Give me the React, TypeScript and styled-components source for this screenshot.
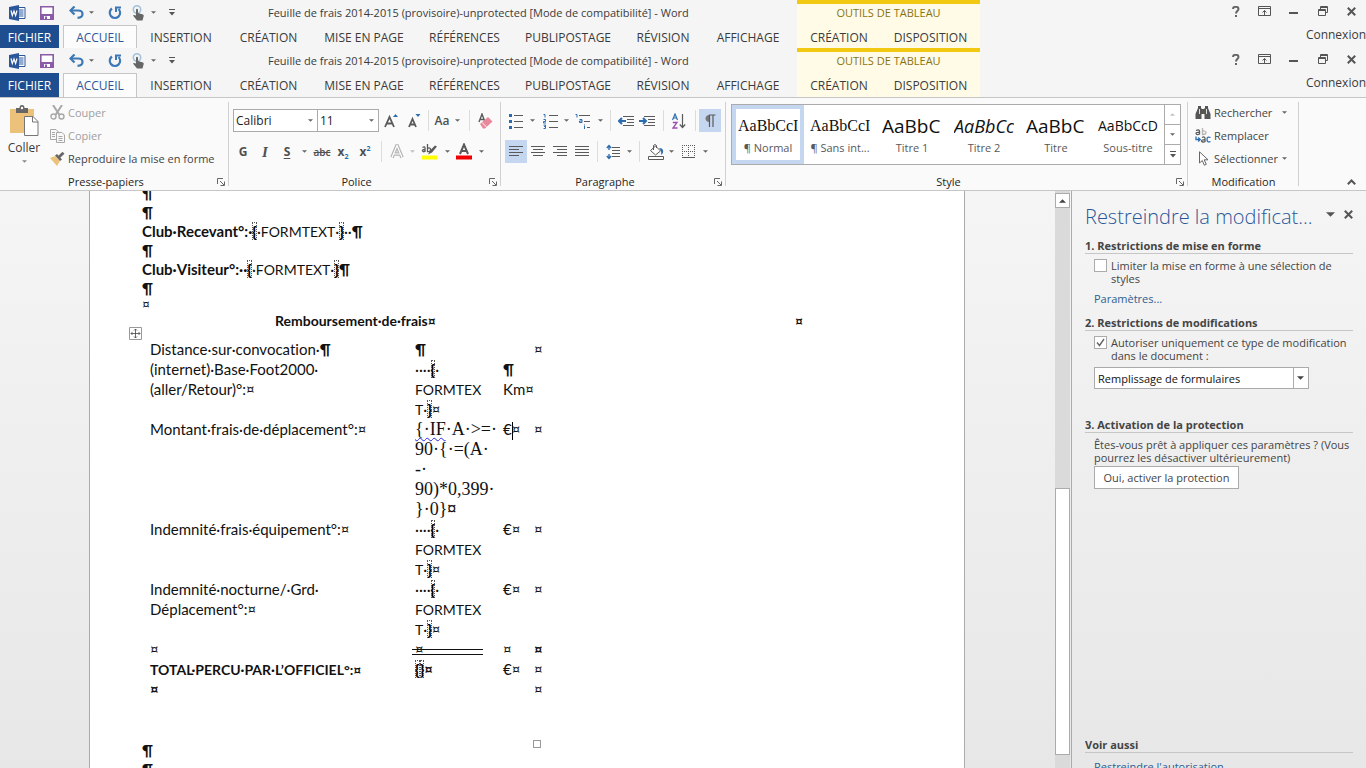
import React from "react";
import styled, { createGlobalStyle, css } from "styled-components";

const UI = `"Open Sans", "Noto Sans", sans-serif`;
const BODY = `Lato, "Noto Sans", sans-serif`;
const SERIF = `"Liberation Serif", serif`;
const BLUE = "#2b6cb0";
const INK = "#5a5a5a";

const Global = createGlobalStyle`
  * { box-sizing: border-box; }
  body { margin: 0; font-family: ${UI}; font-size: 12px; color: #3b3b3b; overflow: hidden; }
  button { font: inherit; color: inherit; background: none; border: 0; padding: 0; cursor: pointer; }
  svg { display: block; flex: none; }
`;

const App_ = styled.div`
  display: flex;
  flex-direction: column;
  height: 100vh;
  background: #f5f5f5;
`;

/* ---------- title bar and tabs ---------- */

const HeaderBar = styled.header<{ $last?: boolean }>`
  display: flex;
  flex: none;
  height: ${(p) => (p.$last ? 50 : 48)}px;
  background: #f5f5f5;
  border-bottom: ${(p) => (p.$last ? "1px solid #c6c6c6" : "0")};
`;
const HeaderMain = styled.div`
  flex: none;
  width: 797px;
  display: flex;
  flex-direction: column;
`;
const TitleRow = styled.div`
  display: flex;
  align-items: center;
  height: 25px;
  flex: none;
`;
const QuickBar = styled.div`
  display: flex;
  align-items: center;
  width: 268px;
  height: 22px;
  padding-left: 9px;
`;
const QuickButton = styled.button<{ $w: number }>`
  display: flex;
  align-items: center;
  justify-content: center;
  width: ${(p) => p.$w}px;
  height: 22px;
`;
const DocTitle = styled.h1`
  margin: 0;
  font-size: 11px;
  line-height: 25px;
  font-weight: 400;
  white-space: nowrap;
`;
const Tabs = styled.nav`
  display: flex;
  flex: 1;
`;
const Tab = styled.button<{ $w: number; $kind?: "file" | "active" }>`
  width: ${(p) => p.$w}px;
  height: 100%;
  padding-top: 2px;
  line-height: 20px;
  white-space: nowrap;
  text-align: center;
  ${(p) => p.$kind === "file" && css`
    background: #1e4e8f;
    color: #fff;
    margin-right: 4px;
  `}
  ${(p) => p.$kind === "active" && css`
    color: #2b579a;
    background: #fcfcfc;
    border: 1px solid #c6c6c6;
    border-bottom: 0;
    padding-top: 1px;
  `}
`;
const Contextual = styled.div`
  display: flex;
  flex-direction: column;
  flex: none;
  width: 183px;
  border-top: 4px solid #f2c811;
  background: #fffbe6;
`;
const ContextTitle = styled.div`
  height: 21px;
  line-height: 18px;
  text-align: center;
  font-size: 11px;
  color: #8a7412;
`;
const HeaderRight = styled.div`
  flex: 1;
  display: flex;
  flex-direction: column;
  align-items: flex-end;
`;
const WindowButtons = styled.div`
  display: flex;
  height: 24px;
`;
const WindowButton = styled.button`
  display: flex;
  align-items: center;
  justify-content: center;
  width: 29px;
  height: 22px;
`;
const SignIn = styled.a`
  line-height: 22px;
  color: inherit;
  text-decoration: none;
`;

/* ---------- ribbon ---------- */

const Ribbon = styled.section`
  display: flex;
  flex: none;
  height: 93px;
  background: #fafafa;
  border-bottom: 1px solid #c6c6c6;
`;
const GroupBox = styled.div<{ $w: number }>`
  display: flex;
  flex-direction: column;
  flex: none;
  width: ${(p) => p.$w}px;
  position: relative;
  &::after {
    content: "";
    position: absolute;
    right: 0;
    top: 4px;
    bottom: 4px;
    width: 1px;
    background: #d0d0d0;
  }
`;
const GroupBody = styled.div`
  flex: 1;
  display: flex;
  padding-left: 4px;
`;
const GroupFoot = styled.div<{ $launch: boolean }>`
  display: flex;
  align-items: center;
  justify-content: center;
  height: 18px;
  padding-right: ${(p) => (p.$launch ? 17 : 0)}px;
  font-size: 11px;
  color: #262626;
`;
const Launcher = styled.button`
  position: absolute;
  right: 4px;
  bottom: 4px;
`;
const ToolRows = styled.div`
  display: flex;
  flex-direction: column;
  gap: 8px;
  padding-top: 11px;
`;
const ToolRow = styled.div`
  display: flex;
  align-items: center;
  height: 23px;
`;
const Tool = styled.button<{ $w: number; $on?: boolean }>`
  display: flex;
  align-items: center;
  justify-content: center;
  width: ${(p) => p.$w}px;
  height: 23px;
  flex: none;
  color: #505050;
  background: ${(p) => (p.$on ? "#c5d6f1" : "transparent")};
`;
const Divider = styled.span<{ $w: number }>`
  display: flex;
  justify-content: center;
  width: ${(p) => p.$w}px;
  height: 21px;
  flex: none;
  &::before { content: ""; width: 1px; background: #dcdcdc; }
`;
const Combo = styled.button<{ $w: number }>`
  display: flex;
  align-items: center;
  justify-content: space-between;
  width: ${(p) => p.$w}px;
  height: 23px;
  padding: 0 4px 0 2px;
  color: #1c1c1c;
  background: #fff;
  border: 1px solid #ababab;
  & + & { border-left: 0; }
`;
const PasteButton = styled.button`
  display: flex;
  flex-direction: column;
  align-items: center;
  width: 40px;
  padding-top: 7px;
  line-height: 20px;
  gap: 2px;
`;
const Stack = styled.div<{ $left: number }>`
  display: flex;
  flex-direction: column;
  padding: 3px 0 0 ${(p) => p.$left}px;
`;
const Command = styled.button<{ $off?: boolean }>`
  display: flex;
  align-items: center;
  height: 23px;
  gap: 3px;
  font-size: 11px;
  color: ${(p) => (p.$off ? "#a0a0a0" : "#444")};
  white-space: nowrap;
`;
const CommandText = styled.span`
  min-width: 65px;
  text-align: left;
`;
const Gallery = styled.div`
  display: flex;
  width: 450px;
  height: 61px;
  margin: 6px 0 0 1px;
  background: #fff;
  border: 1px solid #ababab;
`;
const StyleTile = styled.button<{ $on?: boolean }>`
  display: flex;
  flex-direction: column;
  align-items: center;
  width: 72px;
  height: 59px;
  overflow: hidden;
  border: 4px solid ${(p) => (p.$on ? "#c5d6f1" : "transparent")};
`;
const StyleSample = styled.span<{ $font: string; $size: number; $weight: number; $italic?: boolean }>`
  width: 60px;
  margin-top: 4px;
  overflow: hidden;
  text-align: left;
  white-space: nowrap;
  line-height: 26px;
  height: 26px;
  color: #111;
  font-family: ${(p) => p.$font};
  font-size: ${(p) => p.$size}px;
  font-weight: ${(p) => p.$weight};
  font-style: ${(p) => (p.$italic ? "italic" : "normal")};
`;
const StyleName = styled.span`
  line-height: 24px;
  font-size: 11px;
  color: #595959;
  white-space: nowrap;
`;
const GalleryScroll = styled.div`
  display: flex;
  flex-direction: column;
  width: 16px;
  border-left: 1px solid #ababab;
`;
const GalleryStep = styled.button`
  flex: 1;
  display: flex;
  align-items: center;
  justify-content: center;
  & + & { border-top: 1px solid #ababab; }
`;
const Collapse = styled.button`
  margin-left: auto;
  align-self: flex-end;
  padding: 0 10px 5px 0;
`;

/* ---------- work area ---------- */

const Workspace = styled.main`
  display: flex;
  flex: 1;
  min-height: 0;
  overflow: hidden;
  background: linear-gradient(#f5f5f5, #e7e7e7);
`;
const Canvas = styled.div`
  flex: 1;
  display: flex;
  justify-content: center;
  min-width: 0;
  padding-right: 1px;
`;
const Page = styled.article`
  position: relative;
  width: 876px;
  background: #fff;
  border: solid #ababab;
  border-width: 0 1px;
  padding-left: 52px;
  overflow: hidden;
  color: #111;
  font-family: ${BODY};
  font-size: 15px;
  font-variant-ligatures: none;
`;
const Lines = styled.div<{ $top?: number }>`
  margin-top: ${(p) => p.$top || 0}px;
`;
const Para = styled.p`
  margin: 0;
  line-height: 19px;
  height: 19px;
  white-space: nowrap;
`;
const SmallMark = styled.p`
  margin: 0;
  font-size: 14px;
  line-height: 12px;
`;
const HeadRow = styled.div`
  display: grid;
  grid-template-columns: 520px 1fr;
  padding: 1px 0 8px 133px;
  line-height: 20px;
  font-size: 14px;
  font-weight: 700;
`;
const FeeTable = styled.table`
  border-collapse: collapse;
  table-layout: fixed;
  width: 415px;
  line-height: 20px;
  td {
    padding: 0 0 0 8px;
    vertical-align: top;
    white-space: nowrap;
  }
`;
const Caps = styled.span`
  font-size: 14px;
  line-height: 1;
`;
const CodeText = styled.span`
  font-family: ${SERIF};
  font-size: 18px;
  line-height: 20px;
  display: block;
`;
const Squiggle = styled.span`
  text-decoration: underline wavy #2a2ae0 1px;
  text-underline-offset: 2px;
`;
const Field = styled.b`
  outline: 1px dotted #555;
  outline-offset: -1px;
  color: #000;
  font-weight: 900;
  line-height: 1;
`;
const Caret = styled.i`
  display: inline-block;
  width: 1px;
  height: 18px;
  margin-right: -1px;
  vertical-align: middle;
  background: #000;
`;
const Ruled = styled.span`
  display: block;
  position: relative;
  &::after {
    content: "";
    position: absolute;
    left: -3px;
    top: 10px;
    width: 71px;
    height: 4px;
    border: solid #111;
    border-width: 1px 0;
  }
`;
const Handle = styled.span`
  position: absolute;
  left: 39px;
  top: 136px;
`;
const EndHandle = styled.span`
  position: absolute;
  left: 443px;
  top: 549px;
  width: 8px;
  height: 8px;
  border: 1px solid #999;
`;

const Scrollbar = styled.div`
  display: flex;
  flex-direction: column;
  width: 15px;
  flex: none;
  margin-right: 1px;
  background: #dadada;
`;
const ScrollUp = styled.button`
  display: flex;
  align-items: center;
  justify-content: center;
  height: 15px;
  margin-top: 2px;
  background: #fff;
  border: 1px solid #ababab;
`;
const ScrollThumb = styled.div`
  margin: auto 0 13px;
  height: 267px;
  background: #fff;
  border: 1px solid #ababab;
`;

/* ---------- task pane ---------- */

const Pane = styled.aside`
  display: flex;
  flex-direction: column;
  flex: none;
  width: 295px;
  padding: 10px 13px 0 13px;
  border-left: 1px solid #ababab;
  font-size: 11px;
  line-height: 13px;
  color: #444;
`;
const PaneHead = styled.div`
  display: flex;
  align-items: flex-start;
`;
const PaneTitle = styled.h2`
  margin: 0;
  width: 236px;
  flex: none;
  font-size: 20px;
  line-height: 32px;
  font-weight: 300;
  color: #2b579a;
  white-space: nowrap;
`;
const PaneIcon = styled.button`
  display: flex;
  align-items: center;
  justify-content: center;
  width: 18px;
  height: 26px;
  flex: none;
`;
const SectionTitle = styled.h3<{ $gap: number }>`
  margin: ${(p) => p.$gap}px 0 0;
  font-size: 11px;
  line-height: 15px;
  font-weight: 700;
  border-bottom: 1px solid #c6c6c6;
`;
const CheckLabel = styled.label`
  display: flex;
  gap: 4px;
  margin: 5px 0 0 9px;
  white-space: nowrap;
`;
const CheckBox = styled.input`
  appearance: none;
  display: block;
  width: 13px;
  height: 13px;
  margin: 0;
  background: #fff;
  border: 1px solid #ababab;
`;
const CheckWrap = styled.span`
  position: relative;
  display: block;
  height: 13px;
  svg { position: absolute; left: 2px; top: 2px; pointer-events: none; }
`;
const CheckText = styled.span`
  display: block;
`;
const PaneLink = styled.a<{ $gap: number }>`
  display: block;
  margin: ${(p) => p.$gap}px 0 0 9px;
  color: #2b6095;
  text-decoration: none;
`;
const SelectWrap = styled.div`
  position: relative;
  width: 215px;
  margin: 5px 0 0 9px;
  svg { position: absolute; right: 5px; top: 9px; pointer-events: none; }
  &::after {
    content: "";
    position: absolute;
    right: 15px;
    top: 0;
    width: 1px;
    height: 22px;
    background: #ababab;
  }
`;
const Select = styled.select`
  appearance: none;
  display: block;
  width: 100%;
  height: 22px;
  padding: 0 3px;
  font-family: inherit;
  font-size: 11px;
  color: #111;
  background: #fff;
  border: 1px solid #ababab;
  border-radius: 0;
`;
const PaneText = styled.p`
  margin: 5px 0 0 9px;
  white-space: nowrap;
`;
const PaneButton = styled.button`
  align-self: flex-start;
  width: 145px;
  height: 23px;
  margin: 2px 0 0 9px;
  background: #fff;
  border: 1px solid #ababab;
`;
const PaneFoot = styled.div`
  margin-top: auto;
  height: 31px;
  flex: none;
  overflow: hidden;
`;

/* ---------- icons ---------- */

const Arrow = ({ c = "#666", w = 5, up = false }: { c?: string; w?: number; up?: boolean }) => (
  <svg width={w} height={(w + 1) / 2} viewBox="0 0 6 3"><path d={up ? "M0 3L3 0L6 3Z" : "M0 0H6L3 3Z"} fill={c} /></svg>
);
const WordIcon = () => (
  <svg width="17" height="16" viewBox="0 0 17 16">
    <path d="M9 2.5H16V13.5H9" fill="#fff" stroke="#2b579a" />
    <path d="M10 5H14.500M10 7H14.500M10 9H14.500M10 11H14.500" stroke="#2b579a" />
    <path d="M0 2L10 0V16L0 14Z" fill="#2b579a" />
    <path d="M2 5.500L3.300 10.500L5 6L6.600 10.500L8 5.500" fill="none" stroke="#fff" strokeWidth="1.200" />
  </svg>
);
const SaveIcon = () => (
  <svg width="14" height="14" viewBox="0 0 14 14">
    <path d="M.8 .8H13.200V13.200H.8Z" fill="#fff" stroke="#8a5ba6" strokeWidth="1.600" />
    <path d="M1 8H13V13H1Z" fill="#8a5ba6" />
    <path d="M4 10H10V13H4Z" fill="#fff" /><path d="M5 10.500H7V13H5Z" fill="#8a5ba6" />
  </svg>
);
const UndoIcon = () => (
  <svg width="15" height="13" viewBox="0 0 15 13">
    <path d="M2 4.500H9C12 4.500 13.500 6 13.500 8C13.500 10.500 11.500 11.700 8.500 11.800" fill="none" stroke="#3c78b5" strokeWidth="2.200" />
    <path d="M5.500 .5L1.500 4.500L5.500 8.500" fill="none" stroke="#3c78b5" strokeWidth="2.200" />
  </svg>
);
const RedoIcon = () => (
  <svg width="14" height="14" viewBox="0 0 14 14">
    <path d="M4 2.500A5.200 5.200 0 1 0 10.500 3" fill="none" stroke="#3c78b5" strokeWidth="2.200" />
    <path d="M8 6V1.500H13" fill="none" stroke="#3c78b5" strokeWidth="2" />
  </svg>
);
const TouchIcon = () => (
  <svg width="13" height="16" viewBox="0 0 13 16">
    <circle cx="5" cy="4.500" r="3.700" fill="none" stroke="#9fc0dc" strokeWidth="1.500" />
    <path d="M4 4.500Q5 3 6 4.500V8L11 9.500Q12 10 11.700 11L10.500 15.500H5L1 10.500Q1.500 9.300 4 10.500Z" fill="#666" />
  </svg>
);
const MoreIcon = () => (
  <svg width="6" height="7" viewBox="0 0 6 7"><path d="M0 .5H6" stroke="#555" /><path d="M0 3H6L3 6.500Z" fill="#555" /></svg>
);
const RibbonOptIcon = () => (
  <svg width="13" height="10" viewBox="0 0 13 10">
    <path d="M.5 .5H12.500V9.500H.5ZM.5 2.500H12.500" fill="none" stroke="#555" /><path d="M6.500 9V4.500M4.500 6.500L6.500 4.500L8.500 6.500" fill="none" stroke="#555" />
  </svg>
);
const MinIcon = () => <svg width="9" height="10" viewBox="0 0 9 10"><path d="M0 7H9" stroke="#555" strokeWidth="2" /></svg>;
const RestoreIcon = () => (
  <svg width="10" height="10" viewBox="0 0 10 10"><path d="M2.500 3V.5H9.500V6.500H7.500M2.500 1.500H9.500M.5 3.500H7.500V9.500H.5ZM.5 4.500H7.500" fill="none" stroke="#555" /></svg>
);
const CloseIcon = ({ s = 9 }: { s?: number }) => (
  <svg width={s} height={s} viewBox="0 0 9 9"><path d="M.8 .8L8.200 8.200M8.200 .8L.8 8.200" stroke="#555" strokeWidth="2" /></svg>
);
const HelpIcon = () => (
  <svg width="8" height="11" viewBox="0 0 8 11"><path d="M1 3C1 0 6.500 0 6.500 3C6.500 5 4 5 4 7.500M4 9V11" fill="none" stroke="#666" strokeWidth="2" /></svg>
);
const LaunchIcon = () => (
  <svg width="8" height="8" viewBox="0 0 8 8"><path d="M.5 6V.5H6M3 3L7 7M7.500 3.500V7.500H3.500" fill="none" stroke="#666" /></svg>
);
const PasteIcon = () => (
  <svg width="30" height="31" viewBox="0 0 30 31">
    <path d="M1 4H25V28H1Z" fill="#ecc27a" />
    <path d="M7 8V3H10.500Q10.500 0 13 0Q15.500 0 15.500 3H19V8Z" fill="#666" /><circle cx="13" cy="3" r="1.200" fill="#fff" />
    <path d="M15.500 11.500H24L29 16.500V30.500H15.500Z" fill="#fff" stroke="#777" /><path d="M23.500 11.500V17H29" fill="none" stroke="#777" />
  </svg>
);
const CutIcon = () => (
  <svg width="15" height="15" viewBox="0 0 15 15" fill="none" stroke="#a8a8a8">
    <path d="M3 0L9.500 10M12 0L5.500 10" strokeWidth="2" /><circle cx="3.500" cy="11.500" r="2.500" strokeWidth="1.400" /><circle cx="11.500" cy="11.500" r="2.500" strokeWidth="1.400" />
  </svg>
);
const CopyIcon = () => (
  <svg width="15" height="14" viewBox="0 0 15 14" fill="#fafafa" stroke="#a8a8a8">
    <path d="M.5 .5H6L8.500 3V10.500H.5ZM2 3.500H5M2 5.500H5M2 7.500H5" /><path d="M6.500 3.500H12L14.500 6V13.500H6.500ZM8.500 7.500H12.500M8.500 9.500H12.500M8.500 11.500H12.500" />
  </svg>
);
const BrushIcon = () => (
  <svg width="15" height="14" viewBox="0 0 15 14">
    <path d="M0 6L5 4L10 9L7 14Z" fill="#ecc27a" /><path d="M5 3.500L7 2L12 7.500L10 9Z" fill="#666" /><path d="M9 5L13.500 .8" stroke="#666" strokeWidth="2.800" />
  </svg>
);
const GrowIcon = ({ small = false }: { small?: boolean }) => (
  <svg width="15" height="16" viewBox="0 0 15 16">
    <path d={small ? "M2 14L5.500 6L9 14M3.200 11.500H7.800" : "M1 14L5.500 4L10 14M2.700 10.500H8.300"} fill="none" stroke={INK} strokeWidth="1.800" />
    <path d={small ? "M8.500 1H13.500L11 4Z" : "M9 4L11.500 1L14 4Z"} fill={BLUE} />
  </svg>
);
const EraserIcon = () => (
  <svg width="15" height="16" viewBox="0 0 15 16">
    <path d="M1 9L4 1L7 9M2 6.500H6" fill="none" stroke={INK} strokeWidth="1.400" />
    <path d="M2 11L10 4L14.500 8.500L7 15.500H5Z" fill="#e8889a" /><path d="M4 9.500L8.500 14" stroke="#fafafa" />
  </svg>
);
const OutlineAIcon = () => (
  <svg width="14" height="15" viewBox="0 0 14 15" fill="none">
    <path d="M2 13.500L7 1.500L12 13.500M4 10H10" stroke="#b5b5b5" strokeWidth="3.600" /><path d="M2 13.500L7 1.500L12 13.500M4 10H10" stroke="#fff" strokeWidth="1.200" />
  </svg>
);
const HighlightIcon = () => (
  <svg width="17" height="17" viewBox="0 0 17 17">
    <path d="M1.500 4.500Q4 3 4 5V9M4 6.500Q1 6.500 1.500 8Q2.500 9.500 4 8M6.500 1V8.500Q10 9 9.500 6Q8.500 4 6.500 5.500" fill="none" stroke={INK} strokeWidth="1.300" />
    <path d="M7 11.500L9 7.500L14 2.500L16 3.500L11 9.500Z" fill={INK} /><path d="M1 12.500H16V16.500H1Z" fill="#ff0" />
  </svg>
);
const FontColorIcon = () => (
  <svg width="16" height="17" viewBox="0 0 16 17">
    <path d="M4 11L8 1.500L12 11M5.500 8H10.500" fill="none" stroke={INK} strokeWidth="2" /><path d="M0 12.500H16V16.500H0Z" fill="#f00000" />
  </svg>
);
const BulletsIcon = () => (
  <svg width="14" height="16" viewBox="0 0 14 16">
    <path d="M0 1H3V4H0ZM0 7H3V10H0ZM0 13H3V16H0Z" fill={BLUE} /><path d="M5 2.500H14M5 8.500H14M5 14.500H14" stroke={INK} />
  </svg>
);
const NumbersIcon = () => (
  <svg width="15" height="16" viewBox="0 0 15 16" fill="none">
    <path d="M.5 1.500H2V4.500M.5 6.500H2.500V8.500H.5V10H3M.5 12H2.500V15.500H.5M1 13.500H2.500" stroke={BLUE} /><path d="M6 2.500H15M6 8.500H15M6 14.500H15" stroke={INK} />
  </svg>
);
const MultiIcon = () => (
  <svg width="16" height="16" viewBox="0 0 16 16" fill="none">
    <path d="M.5 1.500H2V4.500M4.500 6.500H7V9.500H4.500V8H7M9.500 11.500V12.500M9.500 13V16" stroke={BLUE} /><path d="M4 2.500H15M9 8.500H15M12 14.500H15" stroke={INK} />
  </svg>
);
const IndentIcon = ({ out = false }: { out?: boolean }) => (
  <svg width="16" height="12" viewBox="0 0 16 12" fill="none">
    <path d="M5 1.500H16M9 4.500H16M9 7.500H16M5 10.500H16" stroke={INK} />
    <path d={out ? "M8 6H1M4 3L1 6L4 9" : "M0 6H7M4 3L7 6L4 9"} stroke={BLUE} strokeWidth="2" />
  </svg>
);
const SortIcon = () => (
  <svg width="14" height="16" viewBox="0 0 14 16" fill="none">
    <path d="M.5 7L3 1L5.500 7M1.500 5H4.500" stroke={BLUE} strokeWidth="1.200" /><path d="M.8 9.500H5L1 15H5.500" stroke="#9a4fb0" strokeWidth="1.300" />
    <path d="M10.500 1V14.500M7.800 11.500L10.500 14.500L13.200 11.500" stroke={INK} strokeWidth="1.200" />
  </svg>
);
const PilcrowIcon = () => (
  <svg width="11" height="14" viewBox="0 0 11 14"><path d="M4.500 8C-.8 8 -.8 1 4.500 1Z" fill="#777" /><path d="M4.500 13V1H10.500M8 1V13" fill="none" stroke={INK} strokeWidth="1.200" /></svg>
);
const AlignIcon = ({ d }: { d: string }) => (
  <svg width="15" height="12" viewBox="0 0 15 12"><path d={d} stroke={INK} /></svg>
);
const SpacingIcon = () => (
  <svg width="14" height="16" viewBox="0 0 14 16" fill="none">
    <path d="M3 1.500V6M.8 4L3 1.500L5.200 4M3 10V14.500M.8 12L3 14.500L5.200 12" stroke={BLUE} strokeWidth="1.400" /><path d="M6 3.500H14M6 6.500H14M6 9.500H14M6 12.500H14" stroke={INK} />
  </svg>
);
const BucketIcon = () => (
  <svg width="17" height="16" viewBox="0 0 17 16" fill="none">
    <path d="M2.500 6.500L7.500 2L12.500 7L7.500 11Z" fill="#fff" stroke={INK} /><path d="M5.500 6V1.500Q7 -.5 8.500 1.500V4" stroke={INK} />
    <path d="M11 4Q16 4 15 9L13 11Q14 7 11 4Z" fill={BLUE} /><path d="M.5 12.500H15.500V15.500H.5Z" fill="#fff" stroke={INK} />
  </svg>
);
const BordersIcon = () => (
  <svg width="13" height="13" viewBox="0 0 13 13" fill="none" stroke={INK}>
    <path d="M0 .5H13M0 6.500H13M.5 0V13M6.500 0V13M12.500 0V13" strokeDasharray="1 1" /><path d="M0 12.500H13" />
  </svg>
);
const FindIcon = () => (
  <svg width="16" height="13" viewBox="0 0 16 13"><path d="M3 0H6V2L7 3H9L10 2V0H13V2L15.500 8V13H9.500V8H6.500V13H.5V8L3 2Z" fill="#555" /><path d="M4.500 3V8M11.500 3V8" stroke="#ddd" /></svg>
);
const ReplaceIcon = () => (
  <svg width="16" height="15" viewBox="0 0 16 15" fill="none">
    <path d="M1 2.500Q4 1 4.500 3V6.500M4.500 4.500Q1 4 1 5.500Q2 7.500 4.500 6" stroke={INK} strokeWidth="1.300" /><path d="M7.500 0V6.500Q11 6.500 11 4.500Q10 2 7.500 3.500" stroke="#b5b5b5" strokeWidth="1.300" />
    <path d="M7 9.500Q10 8 10 10.500V14M10 12Q6.500 11.500 6.500 13Q8 15 10 13.500" stroke={INK} strokeWidth="1.300" /><path d="M15.500 9.500Q12 8 12 11.500Q12 15 15.500 13.500M1 8.500V11.500H5M3.200 9.500L5.200 11.500L3.200 13.500" stroke={BLUE} strokeWidth="1.300" />
  </svg>
);
const PointerIcon = () => (
  <svg width="16" height="15" viewBox="0 0 16 15"><path d="M4.500 .8V12L7.300 9.500L9.300 14.200L11.300 13.300L9.200 8.800H13Z" fill="#fff" stroke="#666" /></svg>
);
const ChevronUp = () => <svg width="9" height="6" viewBox="0 0 9 6"><path d="M.8 5.200L4.500 1.500L8.200 5.200" fill="none" stroke="#555" strokeWidth="2" /></svg>;
const MoveIcon = () => (
  <svg width="13" height="13" viewBox="0 0 13 13" fill="none">
    <path d="M.5 .5H12.500V12.500H.5Z" fill="#fff" stroke="#999" />
    <path d="M6.500 2V11M2 6.500H11M5 3.500L6.500 2L8 3.500M5 9.500L6.500 11L8 9.500M3.500 5L2 6.500L3.500 8M9.500 5L11 6.500L9.500 8" stroke="#444" strokeWidth=".8" />
  </svg>
);

/* ---------- composition ---------- */

const TABS: [string, number][] = [
  ["INSERTION", 88], ["CRÉATION", 87], ["MISE EN PAGE", 104], ["RÉFÉRENCES", 97],
  ["PUBLIPOSTAGE", 110], ["RÉVISION", 80], ["AFFICHAGE", 90],
];

const Header = ({ last }: { last?: boolean }) => (
  <HeaderBar $last={last}>
    <HeaderMain>
      <TitleRow>
        <QuickBar>
          <QuickButton $w={17} aria-label="Word"><WordIcon /></QuickButton>
          <QuickButton $w={42} aria-label="Enregistrer"><SaveIcon /></QuickButton>
          <QuickButton $w={16} aria-label="Annuler"><UndoIcon /></QuickButton>
          <QuickButton $w={14} aria-label="Options d'annulation"><Arrow /></QuickButton>
          <QuickButton $w={34} aria-label="Répéter"><RedoIcon /></QuickButton>
          <QuickButton $w={12} aria-label="Mode tactile"><TouchIcon /></QuickButton>
          <QuickButton $w={18} aria-label="Options du mode"><Arrow /></QuickButton>
          <QuickButton $w={20} aria-label="Personnaliser"><MoreIcon /></QuickButton>
        </QuickBar>
        <DocTitle>Feuille de frais 2014-2015 (provisoire)-unprotected [Mode de compatibilité] - Word</DocTitle>
      </TitleRow>
      <Tabs>
        <Tab $w={59} $kind="file">FICHIER</Tab>
        <Tab $w={74} $kind="active">ACCUEIL</Tab>
        {TABS.map(([t, w]) => <Tab key={t} $w={w}>{t}</Tab>)}
      </Tabs>
    </HeaderMain>
    <Contextual>
      <ContextTitle>OUTILS DE TABLEAU</ContextTitle>
      <Tabs><Tab $w={84}>CRÉATION</Tab><Tab $w={99}>DISPOSITION</Tab></Tabs>
    </Contextual>
    <HeaderRight>
      <WindowButtons>
        <WindowButton aria-label="Aide"><HelpIcon /></WindowButton>
        <WindowButton aria-label="Options du ruban"><RibbonOptIcon /></WindowButton>
        <WindowButton aria-label="Réduire"><MinIcon /></WindowButton>
        <WindowButton aria-label="Restaurer"><RestoreIcon /></WindowButton>
        <WindowButton aria-label="Fermer"><CloseIcon /></WindowButton>
      </WindowButtons>
      <SignIn href="#">Connexion</SignIn>
    </HeaderRight>
  </HeaderBar>
);

const Group = ({ w, label, launch = true, children }: { w: number; label: string; launch?: boolean; children: React.ReactNode }) => (
  <GroupBox $w={w}>
    <GroupBody>{children}</GroupBody>
    <GroupFoot $launch={launch}>{label}</GroupFoot>
    {launch && <Launcher aria-label={`Options ${label}`}><LaunchIcon /></Launcher>}
  </GroupBox>
);

const Glyph = styled.span<{ $size?: number; $serif?: boolean }>`
  font-size: ${(p) => p.$size || 12}px;
  font-weight: 700;
  line-height: 20px;
  ${(p) => p.$serif && css`font-family: ${SERIF}; font-style: italic; font-size: 15px;`}
  u { text-underline-offset: 2px; }
  sub, sup { font-size: 7px; color: ${BLUE}; line-height: 0; }
`;
const Struck = styled.s`
  font-size: 10px;
  font-weight: 600;
`;
const CaseLabel = styled.span`
  font-size: 12px;
  font-weight: 600;
`;

const STYLES: { name: string; sample: string; font: string; size: number; weight: number; italic?: boolean; on?: boolean }[] = [
  { name: "¶ Normal", sample: "AaBbCcI", font: SERIF, size: 16, weight: 400, on: true },
  { name: "¶ Sans int...", sample: "AaBbCcI", font: SERIF, size: 16, weight: 400 },
  { name: "Titre 1", sample: "AaBbC", font: UI, size: 19, weight: 500 },
  { name: "Titre 2", sample: "AaBbCc", font: UI, size: 18, weight: 500, italic: true },
  { name: "Titre", sample: "AaBbC", font: UI, size: 19, weight: 500 },
  { name: "Sous-titre", sample: "AaBbCcD", font: UI, size: 14, weight: 400 },
];

const FormLines = () => (
  <>
    ····<Field>{"{"}</Field>·<br /><Caps>FORMTEX</Caps><br /><Caps>T</Caps>·<Field>{"}"}</Field>¤
  </>
);

export default function App() {
  return (
    <App_>
      <Global />
      <Header />
      <Header last />
      <Ribbon>
        <Group w={229} label="Presse-papiers">
          <PasteButton><PasteIcon />Coller<Arrow c="#888" /></PasteButton>
          <Stack $left={6}>
            <Command $off><CutIcon />Couper</Command>
            <Command $off><CopyIcon />Copier</Command>
            <Command><BrushIcon />Reproduire la mise en forme</Command>
          </Stack>
        </Group>
        <Group w={272} label="Police">
          <ToolRows>
            <ToolRow>
              <Combo $w={85}>Calibri<Arrow /></Combo>
              <Combo $w={61}>11<Arrow /></Combo>
              <Tool $w={24} aria-label="Agrandir la police"><GrowIcon /></Tool>
              <Tool $w={22} aria-label="Réduire la police"><GrowIcon small /></Tool>
              <Divider $w={6} />
              <Tool $w={22}><CaseLabel>Aa</CaseLabel></Tool>
              <Tool $w={8} aria-label="Options de casse"><Arrow /></Tool>
              <Divider $w={16} />
              <Tool $w={16} aria-label="Effacer la mise en forme"><EraserIcon /></Tool>
            </ToolRow>
            <ToolRow>
              <Tool $w={20}><Glyph>G</Glyph></Tool>
              <Tool $w={24}><Glyph $serif>I</Glyph></Tool>
              <Tool $w={20}><Glyph><u>S</u></Glyph></Tool>
              <Tool $w={14} aria-label="Options de soulignement"><Arrow /></Tool>
              <Tool $w={22}><Struck>abc</Struck></Tool>
              <Tool $w={20}><Glyph>x<sub>2</sub></Glyph></Tool>
              <Tool $w={24}><Glyph>x<sup>2</sup></Glyph></Tool>
              <Divider $w={8} />
              <Tool $w={24} aria-label="Effets de texte"><OutlineAIcon /></Tool>
              <Tool $w={6} aria-label="Options d'effets"><Arrow c="#c0c0c0" /></Tool>
              <Tool $w={28} aria-label="Surlignage"><HighlightIcon /></Tool>
              <Tool $w={8} aria-label="Couleurs de surlignage"><Arrow /></Tool>
              <Tool $w={26} aria-label="Couleur de police"><FontColorIcon /></Tool>
              <Tool $w={8} aria-label="Choix de couleur"><Arrow /></Tool>
            </ToolRow>
          </ToolRows>
        </Group>
        <Group w={225} label="Paragraphe">
          <ToolRows>
            <ToolRow>
              <Tool $w={22} aria-label="Puces"><BulletsIcon /></Tool>
              <Tool $w={10} aria-label="Choix de puces"><Arrow /></Tool>
              <Tool $w={26} aria-label="Numérotation"><NumbersIcon /></Tool>
              <Tool $w={6} aria-label="Choix de numérotation"><Arrow /></Tool>
              <Tool $w={28} aria-label="Liste à plusieurs niveaux"><MultiIcon /></Tool>
              <Tool $w={6} aria-label="Choix de liste"><Arrow /></Tool>
              <Divider $w={14} />
              <Tool $w={18} aria-label="Diminuer le retrait"><IndentIcon out /></Tool>
              <Tool $w={24} aria-label="Augmenter le retrait"><IndentIcon /></Tool>
              <Divider $w={8} />
              <Tool $w={24} aria-label="Trier"><SortIcon /></Tool>
              <Divider $w={8} />
              <Tool $w={22} $on aria-label="Afficher tout"><PilcrowIcon /></Tool>
            </ToolRow>
            <ToolRow>
              <Tool $w={22} $on aria-label="Aligner à gauche"><AlignIcon d="M0 .5H14M0 3.500H10M0 6.500H14M0 9.500H10" /></Tool>
              <Tool $w={22} aria-label="Centrer"><AlignIcon d="M0 .5H14M2 3.500H12M0 6.500H14M2 9.500H12" /></Tool>
              <Tool $w={22} aria-label="Aligner à droite"><AlignIcon d="M0 .5H14M4 3.500H14M0 6.500H14M4 9.500H14" /></Tool>
              <Tool $w={22} aria-label="Justifier"><AlignIcon d="M0 .5H14M0 3.500H14M0 6.500H14M0 9.500H14" /></Tool>
              <Divider $w={8} />
              <Tool $w={24} aria-label="Interligne"><SpacingIcon /></Tool>
              <Tool $w={8} aria-label="Choix d'interligne"><Arrow /></Tool>
              <Divider $w={12} />
              <Tool $w={22} aria-label="Trame de fond"><BucketIcon /></Tool>
              <Tool $w={8} aria-label="Couleur de trame"><Arrow /></Tool>
              <Tool $w={26} aria-label="Bordures"><BordersIcon /></Tool>
              <Tool $w={8} aria-label="Choix de bordures"><Arrow /></Tool>
            </ToolRow>
          </ToolRows>
        </Group>
        <Group w={462} label="Style">
          <Gallery>
            {STYLES.map((s) => (
              <StyleTile key={s.name} $on={s.on}>
                <StyleSample $font={s.font} $size={s.size} $weight={s.weight} $italic={s.italic}>{s.sample}</StyleSample>
                <StyleName>{s.name}</StyleName>
              </StyleTile>
            ))}
            <GalleryScroll>
              <GalleryStep aria-label="Styles précédents"><Arrow up c="#c0c0c0" /></GalleryStep>
              <GalleryStep aria-label="Styles suivants"><Arrow /></GalleryStep>
              <GalleryStep aria-label="Tous les styles"><MoreIcon /></GalleryStep>
            </GalleryScroll>
          </Gallery>
        </Group>
        <Group w={111} label="Modification" launch={false}>
          <Stack $left={3}>
            <Command><FindIcon /><CommandText>Rechercher</CommandText><Arrow /></Command>
            <Command><ReplaceIcon />Remplacer</Command>
            <Command><PointerIcon /><CommandText>Sélectionner</CommandText><Arrow /></Command>
          </Stack>
        </Group>
        <Collapse aria-label="Réduire le ruban"><ChevronUp /></Collapse>
      </Ribbon>
      <Workspace>
        <Canvas>
          <Page>
            <Lines $top={-7}>
              <Para><b>¶</b></Para>
              <Para><b>¶</b></Para>
              <Para><b>Club·Recevant°:·</b><Field>{"{"}</Field>·<Caps>FORMTEXT</Caps>·<Field>{"}"}</Field>··<b>¶</b></Para>
              <Para><b>¶</b></Para>
              <Para><b>Club·Visiteur°:··</b><Field>{"{"}</Field>·<Caps>FORMTEXT</Caps>·<Field>{"}"}</Field><b>¶</b></Para>
              <Para><b>¶</b></Para>
              <SmallMark>¤</SmallMark>
            </Lines>
            <HeadRow><span>Remboursement·de·frais¤</span><span>¤</span></HeadRow>
            <FeeTable>
              <colgroup><col style={{ width: 265 }} /><col style={{ width: 88 }} /><col style={{ width: 31 }} /><col style={{ width: 31 }} /></colgroup>
              <tbody>
                <tr>
                  <td>Distance·sur·convocation·<b>¶</b><br />(internet)·Base·Foot2000·<br />(aller/Retour)°:¤</td>
                  <td><b>¶</b><br /><FormLines /></td>
                  <td><br /><b>¶</b><br />Km¤</td>
                  <td>¤</td>
                </tr>
                <tr>
                  <td>Montant·frais·de·déplacement°:¤</td>
                  <td>
                    <CodeText><Squiggle>{"{·IF"}</Squiggle>{"·A·>=·"}<br />{"90·{·=(A·"}<br />-·<br />90)*0,399·<br />{"}·0}"}<b>¤</b></CodeText>
                  </td>
                  <td>€<Caret />¤</td>
                  <td>¤</td>
                </tr>
                <tr><td>Indemnité·frais·équipement°:¤</td><td><FormLines /></td><td>€¤</td><td>¤</td></tr>
                <tr><td>Indemnité·nocturne/·Grd·<br />Déplacement°:¤</td><td><FormLines /></td><td>€¤</td><td>¤</td></tr>
                <tr><td>¤</td><td><Ruled>¤</Ruled></td><td>¤</td><td><b>¤</b></td></tr>
                <tr><td><Caps><b>TOTAL·PERCU·PAR·L’OFFICIEL°:¤</b></Caps></td><td><Field>{"{"}</Field><Field>{"}"}</Field><b>¤</b></td><td>€¤</td><td>¤</td></tr>
                <tr><td><b>¤</b></td><td /><td /><td>¤</td></tr>
              </tbody>
            </FeeTable>
            <Lines $top={42}>
              <Para><b>¶</b></Para>
              <Para><b>¶</b></Para>
            </Lines>
            <Handle><MoveIcon /></Handle>
            <EndHandle />
          </Page>
        </Canvas>
        <Scrollbar>
          <ScrollUp aria-label="Défiler vers le haut"><Arrow up c="#444" w={7} /></ScrollUp>
          <ScrollThumb />
        </Scrollbar>
        <Pane>
          <PaneHead>
            <PaneTitle>Restreindre la modificat...</PaneTitle>
            <PaneIcon aria-label="Options du volet"><Arrow c="#555" w={9} /></PaneIcon>
            <PaneIcon aria-label="Fermer le volet"><CloseIcon /></PaneIcon>
          </PaneHead>
          <SectionTitle $gap={5}>1. Restrictions de mise en forme</SectionTitle>
          <CheckLabel>
            <CheckWrap><CheckBox type="checkbox" /></CheckWrap>
            <CheckText>Limiter la mise en forme à une sélection de<br />styles</CheckText>
          </CheckLabel>
          <PaneLink href="#" $gap={7}>Paramètres...</PaneLink>
          <SectionTitle $gap={10}>2. Restrictions de modifications</SectionTitle>
          <CheckLabel>
            <CheckWrap>
              <CheckBox type="checkbox" defaultChecked />
              <svg width="9" height="9" viewBox="0 0 9 9"><path d="M1 4.500L3.500 7.500L8 1" fill="none" stroke="#666" strokeWidth="1.400" /></svg>
            </CheckWrap>
            <CheckText>Autoriser uniquement ce type de modification<br />dans le document :</CheckText>
          </CheckLabel>
          <SelectWrap>
            <Select aria-label="Type de modification"><option>Remplissage de formulaires</option></Select>
            <Arrow c="#444" w={7} />
          </SelectWrap>
          <SectionTitle $gap={28}>3. Activation de la protection</SectionTitle>
          <PaneText>Êtes-vous prêt à appliquer ces paramètres ? (Vous<br />pourrez les désactiver ultérieurement)</PaneText>
          <PaneButton>Oui, activer la protection</PaneButton>
          <PaneFoot>
            <SectionTitle $gap={0}>Voir aussi</SectionTitle>
            <PaneLink href="#" $gap={7}>Restreindre l'autorisation</PaneLink>
          </PaneFoot>
        </Pane>
      </Workspace>
    </App_>
  );
}
